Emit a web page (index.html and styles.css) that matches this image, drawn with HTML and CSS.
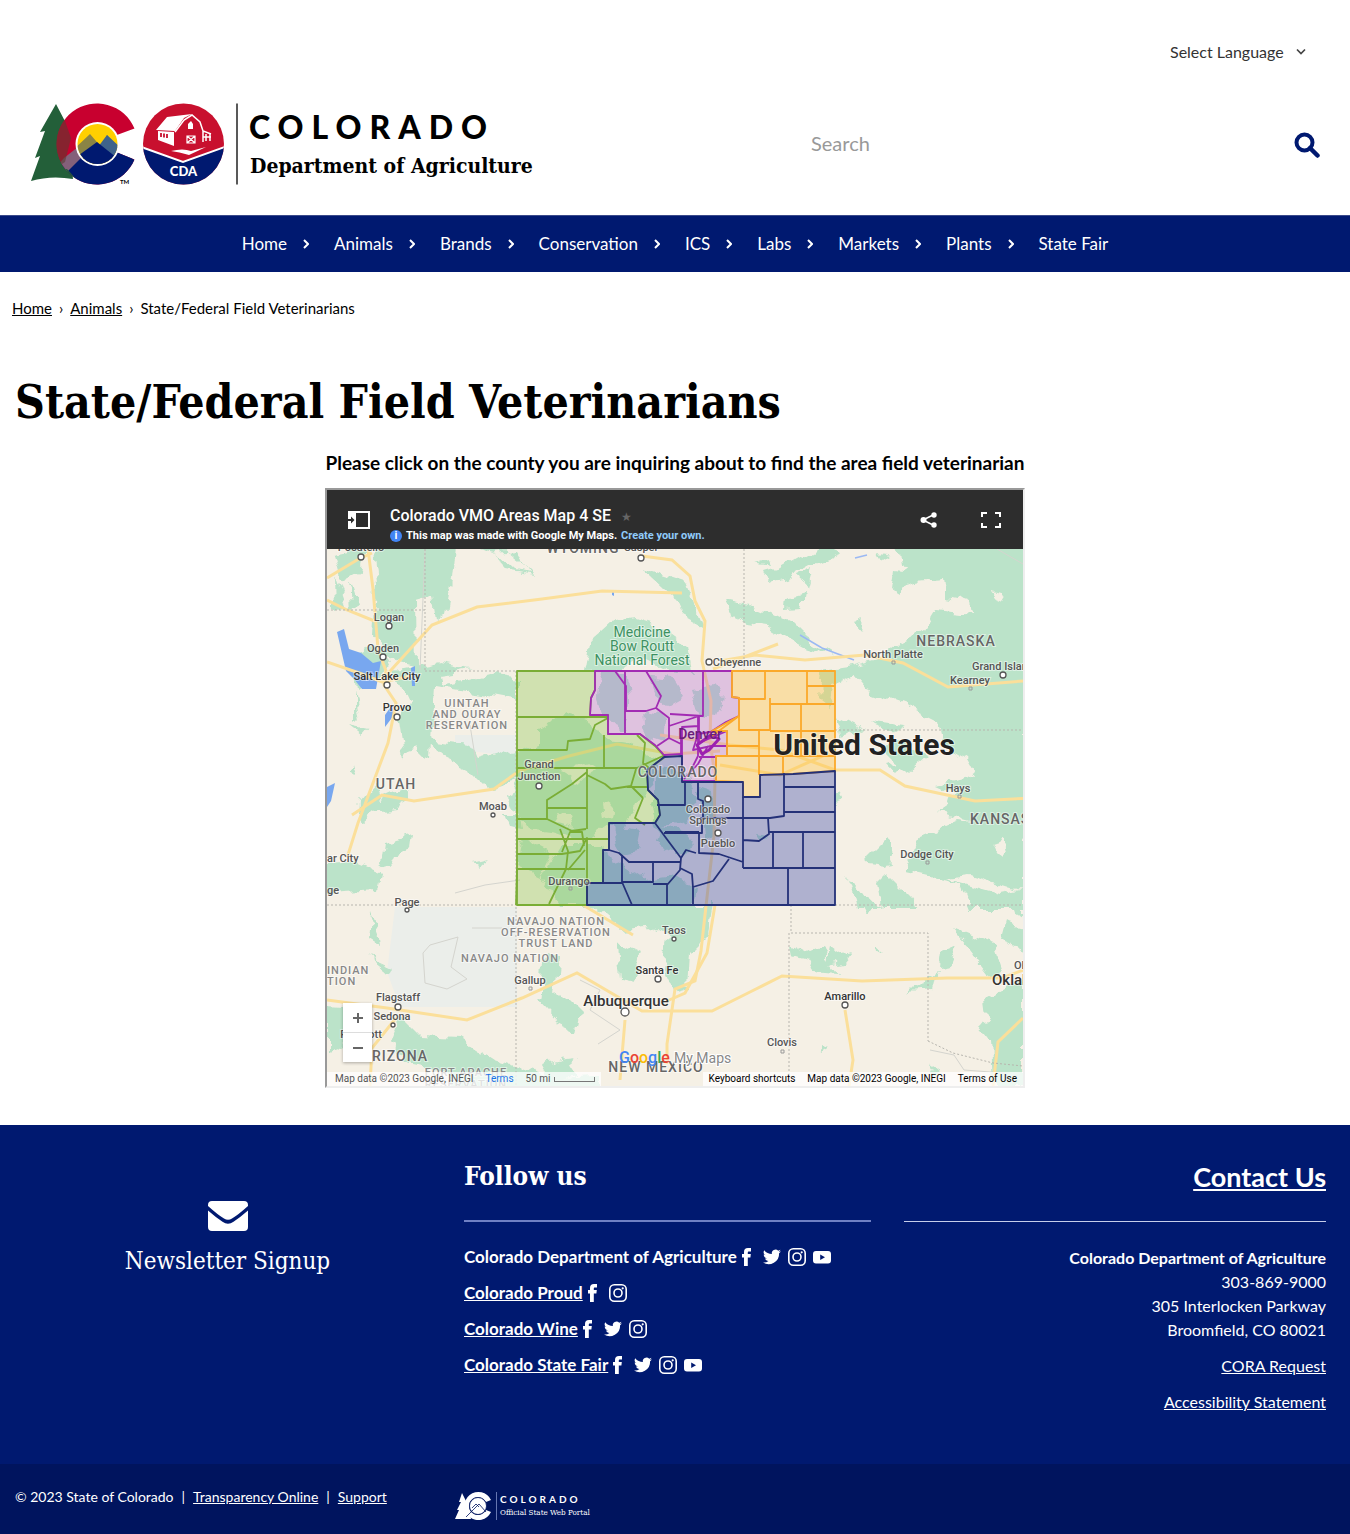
FILE: index.html
```html
<!DOCTYPE html>
<html lang="en">
<head>
<meta charset="utf-8">
<meta name="viewport" content="width=device-width, initial-scale=1">
<title>State/Federal Field Veterinarians | Department of Agriculture</title>
<link rel="stylesheet" href="styles.css">
</head>
<body>
<svg class="sprite" aria-hidden="true">
  <symbol id="i-chev" viewBox="0 0 6 10"><path d="M1 1l4 4-4 4" fill="none" stroke="currentColor" stroke-width="2"/></symbol>
  <symbol id="i-fb" viewBox="0 0 20 20"><path d="M7 19V10.500H5V7h2V5c0-2.700 1.300-4 4-4h3v3.500h-2c-1 0-1.200.4-1.200 1.200V7h3l-.4 3.500h-2.600V19z" fill="currentColor"/></symbol>
  <symbol id="i-tw" viewBox="0 0 20 20"><path d="M19 4.200c-.7.300-1.400.5-2.100.6.800-.5 1.300-1.200 1.600-2-.7.400-1.500.7-2.300.9a3.700 3.700 0 0 0-6.300 3.400A10.500 10.500 0 0 1 2.200 3.200a3.700 3.700 0 0 0 1.200 4.900c-.6 0-1.200-.2-1.700-.5 0 1.800 1.200 3.400 3 3.700-.6.200-1.100.2-1.700.1.500 1.500 1.800 2.500 3.500 2.600A7.400 7.400 0 0 1 1 15.500 10.500 10.500 0 0 0 17.100 6.200c.8-.5 1.400-1.200 1.900-2z" fill="currentColor"/></symbol>
  <symbol id="i-ig" viewBox="0 0 20 20"><g fill="none" stroke="currentColor" stroke-width="1.600"><rect x="1.800" y="1.800" width="16.400" height="16.400" rx="4.500"/><circle cx="10" cy="10" r="4"/></g><circle cx="14.700" cy="5.300" r="1.100" fill="currentColor"/></symbol>
  <symbol id="i-yt" viewBox="0 0 20 20"><path fill-rule="evenodd" d="M4 4h12q3 0 3 3v6.500q0 3-3 3H4q-3 0-3-3V7q0-3 3-3zm4.200 3.500v5.500l4.800-2.750z" fill="currentColor"/></symbol>
</svg>

<header class="site-header">
  <div class="language">
    <select class="language-select" aria-label="Select Language"><option>Select Language</option></select>
    <svg class="language-arrow" viewBox="0 0 10 8" aria-hidden="true"><path d="M1 1.500l4 4 4-4" fill="none" stroke="#444" stroke-width="1.700"/></svg>
  </div>
  <div class="masthead">
    <a class="logo" href="#" aria-label="Colorado Department of Agriculture">
      <svg class="logo-art" viewBox="30 102 510 86">
        <defs><clipPath id="seal"><circle cx="183.500" cy="144" r="40.500"/></clipPath><clipPath id="sun"><circle cx="97.500" cy="144" r="20"/></clipPath>
        <clipPath id="ring"><path d="M134.500 128.500A40.500 40.500 0 1 0 134.500 159.500L116 152A20 20 0 1 1 115.500 135.500z"/></clipPath></defs>
        <path d="M56 104l13 25-3-1 7 22-4-2 4 31q-22-4-42 2l9-25-5 2 10-27-5 1z" fill="#235f39"/>
        <g clip-path="url(#ring)"><rect x="50" y="100" width="90" height="90" fill="#c8002f"/><path d="M50 176l48-42 45 32v25H50z" fill="#001970"/><path d="M50 174l14-16 14-11 4 10-14 14-18 16z" fill="#84607a"/><path d="M56 104l8 14 7 20-6 24-12 8z" fill="#5a3a30" opacity=".6"/><path d="M52 172l15-3 9 10-20 5z" fill="#235f39"/></g>
        <circle cx="97.500" cy="144" r="22" fill="#fff"/>
        <g clip-path="url(#sun)"><rect x="75" y="120" width="45" height="45" fill="#ffcf00"/><path d="M72 151l18-17 12 14 5-13 16 18v15H72z" fill="#8a8445"/><path d="M98 147l9-12 14 13v18z" fill="#3e638b"/><path d="M75 158l22-16 24 19v10H75z" fill="#001970"/></g>
        <text x="120" y="184" class="logo-tm">TM</text>
        <g clip-path="url(#seal)"><rect x="140" y="100" width="90" height="90" fill="#c8102e"/><path d="M140 147l43 15 43-15v45h-86z" fill="#001970"/><path d="M140 146.500l43 15.500 43-15.500" fill="none" stroke="#fff" stroke-width="2"/></g>
        <path d="M156 130l11-13 25-3-8 4-9 13zM158 131l16 1v14l-16-6zM171 151q12-3 20 0l15-4-17 8q-10-3-18-4z" fill="#fff"/>
        <path d="M175 132l9-12 8-5 8 7 3 9 8 3M203 131v11M206 134v7M210 134v7M203 137h8" fill="none" stroke="#fff" stroke-width="1.500"/>
        <path d="M161 133v4M164 133.500v4M167 134v4" stroke="#c8102e" stroke-width="1.800"/>
        <path d="M188 129v-5l3-3 2 3v5z" fill="#fff"/>
        <path d="M187 136h8v7h-8zM187 136l8 7M195 136l-8 7" fill="none" stroke="#fff" stroke-width="1.200"/>
        <text x="183.500" y="176" text-anchor="middle" class="logo-cda">CDA</text>
        <path d="M237 103.500v81" stroke="#222" stroke-width="1.500"/>
        <text x="249" y="139" class="logo-state">COLORADO</text>
        <text x="250" y="173" class="logo-dept">Department of Agriculture</text>
      </svg>
    </a>
    <form class="search">
      <input class="search-box" type="search" placeholder="Search" aria-label="Search">
      <button class="search-button" type="button" aria-label="Search"><svg viewBox="0 0 26 26" width="26" height="26"><circle cx="10.500" cy="10.500" r="8" fill="none" stroke="#001970" stroke-width="4"/><path d="M16 16l7.500 7.500" stroke="#001970" stroke-width="4.500" stroke-linecap="round"/></svg></button>
    </form>
  </div>
</header>

<nav class="main-nav" aria-label="Main">
  <a href="#">Home <svg class="chev"><use href="#i-chev"/></svg></a>
  <a href="#">Animals <svg class="chev"><use href="#i-chev"/></svg></a>
  <a href="#">Brands <svg class="chev"><use href="#i-chev"/></svg></a>
  <a href="#">Conservation <svg class="chev"><use href="#i-chev"/></svg></a>
  <a href="#">ICS <svg class="chev"><use href="#i-chev"/></svg></a>
  <a href="#">Labs <svg class="chev"><use href="#i-chev"/></svg></a>
  <a href="#">Markets <svg class="chev"><use href="#i-chev"/></svg></a>
  <a href="#">Plants <svg class="chev"><use href="#i-chev"/></svg></a>
  <a href="#">State Fair</a>
</nav>

<main>
  <nav class="breadcrumb" aria-label="Breadcrumb"><a href="#">Home</a><span>›</span><a href="#">Animals</a><span>›</span>State/Federal Field Veterinarians</nav>
  <h1>State/Federal Field Veterinarians</h1>
  <p class="intro">Please click on the county you are inquiring about to find the area field veterinarian</p>

  <section class="map" aria-label="Colorado VMO Areas Map 4 SE">
    <div class="map-bar">
      <button class="map-icon" type="button" aria-label="Toggle legend"><svg viewBox="0 0 22 18" width="22" height="18"><rect x="1" y="1" width="20" height="16" fill="none" stroke="#fff" stroke-width="2"/><path d="M0 0h8v18H0z" fill="#fff"/><path d="M0 8h3V5.500L6.500 9 3 12.500V10H0z" fill="#2d2d2d"/></svg></button>
      <div class="map-heading">
        <div class="map-title">Colorado VMO Areas Map 4 SE <span class="star">★</span></div>
        <div class="map-sub"><span class="info">i</span>This map was made with Google My Maps. <a href="#">Create your own.</a></div>
      </div>
      <button class="map-icon" type="button" aria-label="Share"><svg viewBox="0 0 18 16" width="18" height="16" fill="#fff"><path d="M3 8l11-5.500M3 8l11 5.500" stroke="#fff" stroke-width="1.500"/><circle cx="3.500" cy="8" r="3"/><circle cx="14" cy="3" r="2.700"/><circle cx="14" cy="13" r="2.700"/></svg></button>
      <button class="map-icon" type="button" aria-label="Full screen"><svg viewBox="0 0 20 16" width="20" height="16" fill="none" stroke="#fff" stroke-width="2"><path d="M1 5V1h5M14 1h5v4M19 11v4h-5M6 15H1v-4"/></svg></button>
    </div>
    <div class="map-canvas">
      <svg class="map-art" viewBox="327 549 696 537">
        <defs><filter id="rough" x="-5%" y="-5%" width="110%" height="110%"><feTurbulence type="fractalNoise" baseFrequency=".055" numOctaves="3" seed="7"/><feDisplacementMap in="SourceGraphic" scale="16" xChannelSelector="R" yChannelSelector="G"/></filter></defs>
        <rect x="327" y="549" width="696" height="537" fill="#f5f0e5"/>
        <path d="M395 907h122v100H400l-13-35zM455 735h62v22l-62-8z" fill="#ebeeea"/>
        <g fill="#bbe3c9" filter="url(#rough)">
          <path d="M372 545h84l-3 35-6 32-10 8-4-25-18 5 1 70-20-5-23-30 3-50zM335 555l30-6-5 22-18 10zM335 575l10 30-9 5zM350 580l8 25-6 8zM478 548l18 4 9 20 30 5-18-18-15-12zM495 552l20-2 15 25-14-3zM640 566l45 15 18 45-22-12-8-18z"/>
          <path d="M763 571l27-8 28-16 20 8-25 10-25 14-20 4zM757 562l10-3 2 6zM800 575l14-6-6 22zM785 599l18-5-2 13-17 1zM726 598l24 5 20 9 20 10 18 18 25 15-30-9-35-20-20-3-18-8zM855 622l8-5-2 12zM878 555l12 2-8 5zM895 570l12 2 12-12 4 18-13 5-8 14-10-6zM945 590l14 4-4 8-10-2z"/>
          <path d="M892 545h136v290l-18 8-28 5 10-20-30-8-26-10 22-15-22-10 40-10-8-14-25-15-6-25-28-14-44-16-12-14-22 8-2 20-10-8 2-26 34-5 25-7 16-14 28-15 12-20 36 4-2-14-24-8-2-14-30 2-14-16-2-14z"/>
          <path d="M835 715l30 15-25 8zM870 720l35 5-15 8zM880 745l22-2 25 14-15 13-17-10zM835 790l8 10-8 3zM885 765l22-5-14 14zM868 855l18-18 8 22-8 10-17-2zM920 836l35-15 70 8v80h-55l-10-25-55-12 8-15zM846 873l18 25 20 10-4-24 8-8 20 20 8 12h-60z"/>
          <path d="M395 672l45-8 50 10 30 5v22l-38-7-48-8-4 75-15-15-10 15-6-40 10-18zM420 738l45 6 12 18 40-12v30l-28 8-18-18-26-12zM355 690l5 30-5 5zM380 800l28-12-10 22-25 3-15 14 2-26 15-17zM350 727l18 4-5 6zM352 762l4 15-8-5zM384 842l28-6-2 14-15 6-6 14-8-6zM327 865l30-3 24 10-4 17-50 3zM470 862l16-4-9 8zM358 690l-4-35 30-8 8 20-15 10zM503 815l18 0 2 15-15-2z"/>
          <path d="M600 672l28 0 2 30-6 26-20-8-6-20zM642 712l24 4-4 28-18-6zM648 676l24 2 12 20-14 8-14-12zM692 690l22-4 14 14-8 18-20-2zM590 640l20-18 26-4 24 8 28 20 4 26-24-2-20-10-30 10-34 2z"/>
          <path d="M540 730l26-16 24 8 14 16 24 4 30 16-6 30-14 14-14 30-18-4-20 14-28-10-30-4-20-30 10-20-8-24 30-10zM560 845l44 0 8 24-20 36h-34l-18-28zM520 840l30 15-10 20-25-12z"/>
          <path d="M656 768l30 4 12 26-12 24-28 6-8-20 6-14zM612 826l30 4-4 20-18 4zM590 872l30-10 26 18 30-4 20 12-4 17h-100zM660 826l24 6 12 16-14 8-26-14zM700 790l12 4 4 40-12 6zM755 834l14 2-8 8z"/>
          <path d="M593 905h120l-5 30-18 18-2 35-15 4-10-22 5-34-20-10-28 2zM616 940l24 12-6 28-14-3zM545 950l14 5-4 40-14 10zM535 998l25-5 20 20-4 18-18-8zM370 915l8 22 1 10-11-7zM367 957l26 12-4 5zM327 1008l28 2 5 30-33 12zM400 1015l20 20 40 2 34 22 55 18 50-2v15H455l-10-20-40-8-15-20zM540 1065l28-6 10 15-30 5zM562 1058l18-2-12 10z"/>
          <path d="M792 944l18 10 10-4 8 12 8 12-20-2-8-12-14-4zM828 948l8 6 16-4-10 12-16 3zM877 945l9 8-8-3zM905 993l32-20-4 18zM940 955l18-8-8 20-12 2zM950 928l45 18 8 25-15 3-20-26zM1000 940l24 10v-20l-20-5zM985 1000l38-20v106h-30l-2-45-12-15 8-10zM860 905l14 0-8 12zM820 1048l10 2-8 5zM925 1060l12 10-2 5zM945 1010l12 15zM1000 905h23v15z"/>
        </g>
        <g fill="#f5f0e5" filter="url(#rough)"><path d="M988 592l12 2 3 8-10-4zM440 675l32-5 25 2-30 8-25 6zM990 845l12-4 3 12-10 3zM945 878l25-3 50 15-20 4zM560 770l24-6 12 8-18 10zM600 800l12 4-2 14-8 2zM556 812l14 2 4 12-14-4z"/></g>
        <g fill="#78a7ef"><path d="M337 632l7-3 5 20 12 4 12 10 8-2-5 28-14 0-8-10-8-8zM385 715l7-10 2 10-9 12zM327 787l8-4-4 18-4 6zM411 668l4-2v20h-3zM612 591h2v5l-2-1z"/><path d="M855 558l12-3M800 635l22 13 32 12" fill="none" stroke="#9bb9f3" stroke-width="1.500"/></g>
        <path d="M470 725l8 50M425 550l-5 120M472 928h30M430 945l28-8-7 30 16 12-20 10-22-6-2-30zM580 980l20 10-10 20 30 20-22 14M997 549l26 15M930 1050l24 5 10 15 40 3M455 893l30-8 35-5" fill="none" stroke="#d4d4ce" stroke-width="1"/>
        <g fill="none" stroke="#fbdf9a" stroke-width="3">
          <path d="M327 578l30-18 15-7M368 549l5 40 5 60 8 22-2 14 12 18-8 40-30 80-11 35M327 662l35 12 20 8 30-6M327 600l20 10 30 12M382 680l50-55 45-18 65-8 60-8 80 2"/><path d="M352 815l30-20 32 6 80-12 25-18 50-15 48-12 55 10 48-3M660 735l70 10 50 5 55 20 45 0 25 16 70 15 75-4"/><path d="M642 556l30 4 18 16 5 25 10 20-3 40 9 40-1 40 5 35-1 60-8 70-5 45-6 30-20 8-8 55 0 20M720 661l35-6 50 5 60-5 38 8 45 24 75-6M713 669l65-25M583 905l50 30"/><path d="M327 1000l60 8 80 12 55-22 55-25 65 38 70 0 40-20 30-15 80 5 85-3 55 0 40-15 60-5M625 1020l-5 60M715 905l-8 48-22 40-18 8M396 1018l-24 30-2 38M845 1010l8 50-4 26M1023 1018l-25 24-5 44M720 765l60 10 45-20"/>
        </g>
        <g fill="none" stroke="#b7b5ae" stroke-width="1" stroke-dasharray="2 2"><path d="M327 610h98v61M425 549v61M425 671h410M744 549v122M835 730h188M327 905h696M516 671v415M791 905v28h137v108M789 933v153M928 1041l25 12 40 10 30 3"/></g>
        <g fill="none" stroke-width="1.800" stroke-linejoin="round">
          <path d="M517 671h78v19l-4 8-1 17h18v19h32l15 12 10 11-18 13 1 20 10 10 2 15-5 8h-46v27h-6v33h-16v22h-70z" fill="#8bc34a" fill-opacity=".34" stroke="#7aad35"/>
          <path d="M517 717h91M517 750h50l1-9 22-2 5-14 13-7M517 768h120l28-13M604 735v33M637 735l8 8-2 20 6 5M587 768v61M547 820v-20l25-16 15-12M547 808h40M517 819h30l25 12 14-2M517 839h91M517 854h45l18-3 7-13v67M517 869h68M517 869l-1 36M560 829l8 22-2 18-17 35M587 775l18 9 6 5 20-3 12 12M631 786l5-17M643 798l-8 20 10 7M585 850l-17 20M562 852l8-20 12 0 2 14M627 787h20" stroke="#7aad35"/>
          <path d="M732 671v26l7 1v18l-13 6-14 9h15v25h-11v25h-34v-27l-18 1-9-10-15-11h-32v-19h-18l1-17 4-8v-19z" fill="#a64bd0" fill-opacity=".28" stroke="#a22bb3"/>
          <path d="M625 671v63M615 671l11 15v25l20 0 10-3 5-12-15-25M656 708l13 10v20l-12 8M703 671v45l-33-2M669 726l30-10 0 27 28-12M682 755v-28l17-1M669 738l12 6M698 716v40l-10 20M699 757h17M681 728v28M726 746h-15l-18 4 5-16 18-3M708 746l-10 18-14 15" stroke="#a22bb3"/>
          <path d="M697 745l14-10 8 4-10 11-7 4z" stroke="#9c1fb0" stroke-width="3"/>
          <path d="M732 671h103v100l-42 3-33 1v22h-17v-15l-27-1v-25h11v-25h-15l27-15v-18l-7-1z" fill="#ffbf3f" fill-opacity=".38" stroke="#fba92a"/>
          <path d="M765 671v28l-26 0M807 671v33h-37v26h-31v-14M770 698v6M807 686h28M807 704h28M801 704v52M759 731v44M727 746h32M727 756h108M783 756v18M770 731l65 0M739 716l-27 20" stroke="#fba92a"/>
          <path d="M835 771l-42 3-33 1v22h-17v-15h-61v-26l-18 1-17 13 1 20 10 10 2 15-5 8h-46v27h-6v33h-16v22h248z" fill="#3542a8" fill-opacity=".36" stroke="#243178"/>
          <path d="M784 773v43l-14 2h-70M784 787h51M784 812h51M743 797v71M702 818v15h-38M743 840l16 1 10-7-1-16M768 832h67M773 832v36M803 832v36M743 868h92M788 868v37M699 833v20l20 1 24 8M609 850l10 3 10 9h52M622 855v28h-19M622 882h31v-20M653 884h14v21M622 882l10 23M685 783v22h-28M693 905v-18l20-6 16-22M698 782v17l5 2v17M655 823l11 15 15 20-1 12-13 15M681 858l5-8 10 3M665 832h34M680 868l12 6 1 14" stroke="#243178"/>
        </g>
        <g class="map-labels">
          <text x="361" y="551">Pocatello</text><text x="641" y="551">Casper</text><text x="583" y="553" class="state">WYOMING</text>
          <text x="389" y="621">Logan</text><text x="383" y="652">Ogden</text><text x="387" y="680" class="mid">Salt Lake City</text><text x="397" y="711" class="mid">Provo</text>
          <text x="737" y="666">Cheyenne</text><text x="893" y="658">North Platte</text><text x="970" y="684">Kearney</text><text x="972" y="670" class="start">Grand Island</text>
          <g class="forest"><text x="642" y="637">Medicine</text><text x="642" y="651">Bow Routt</text><text x="642" y="665">National Forest</text></g>
          <text x="956" y="646" class="state">NEBRASKA</text><text x="396" y="789" class="state">UTAH</text><text x="678" y="777" class="state">COLORADO</text><text x="970" y="824" class="state start">KANSAS</text>
          <g class="reserve"><text x="467" y="707">UINTAH</text><text x="467" y="718">AND OURAY</text><text x="467" y="729">RESERVATION</text><text x="556" y="925">NAVAJO NATION</text><text x="556" y="936">OFF-RESERVATION</text><text x="556" y="947">TRUST LAND</text><text x="510" y="962">NAVAJO NATION</text><text x="327" y="974" class="start">INDIAN</text><text x="327" y="985" class="start">TION</text><text x="466" y="1076">FORT APACHE</text><text x="466" y="1088">RESERVATION</text></g>
          <text x="539" y="768">Grand</text><text x="539" y="780">Junction</text><text x="493" y="810">Moab</text><text x="700" y="739" class="denver">Denver</text>
          <text x="864" y="755" class="country">United States</text>
          <text x="708" y="813">Colorado</text><text x="708" y="824">Springs</text><text x="718" y="847">Pueblo</text><text x="569" y="885">Durango</text>
          <text x="958" y="792">Hays</text><text x="927" y="858">Dodge City</text><text x="327" y="862" class="start">ar City</text><text x="327" y="894" class="start">ge</text><text x="407" y="906">Page</text>
          <text x="674" y="934">Taos</text><text x="657" y="974" class="mid">Santa Fe</text><text x="530" y="984">Gallup</text><text x="626" y="1006" class="city">Albuquerque</text><text x="398" y="1001">Flagstaff</text><text x="392" y="1020">Sedona</text><text x="361" y="1038">Prescott</text>
          <text x="372" y="1061" class="state start">RIZONA</text><text x="845" y="1000" class="mid">Amarillo</text><text x="782" y="1046">Clovis</text><text x="992" y="985" class="city start">Oklahoma</text><text x="1014" y="969" class="start">OK</text><text x="656" y="1072" class="state">NEW MEXICO</text>
        </g>
        <g fill="#fff" stroke="#555" stroke-width="1.300"><circle cx="361" cy="557" r="3"/><circle cx="641" cy="558" r="3"/><circle cx="389" cy="626" r="3"/><circle cx="383" cy="657" r="3"/><circle cx="387" cy="685" r="3"/><circle cx="397" cy="717" r="3"/><circle cx="709" cy="662" r="3"/><circle cx="1003" cy="675" r="3"/><circle cx="539" cy="786" r="3"/><circle cx="493" cy="815" r="2"/><circle cx="708" cy="799" r="3"/><circle cx="718" cy="833" r="3"/><circle cx="407" cy="910" r="2"/><circle cx="674" cy="939" r="2"/><circle cx="658" cy="979" r="3"/><circle cx="625" cy="1012" r="4"/><circle cx="398" cy="1007" r="3"/><circle cx="393" cy="1025" r="2"/><circle cx="845" cy="1005" r="3"/></g>
        <g fill="none" stroke="#999"><path d="M569 887h3v3h-3zM529 987h3v3h-3zM781 1050h3v3h-3zM958 795h3v3h-3zM926 861h3v3h-3zM892 661h3v3h-3zM969 687h3v3h-3z"/></g>
        <text x="619" y="1063" class="google"><tspan fill="#4285f4">G</tspan><tspan fill="#ea4335">o</tspan><tspan fill="#fbbc05">o</tspan><tspan fill="#4285f4">g</tspan><tspan fill="#34a853">l</tspan><tspan fill="#ea4335">e</tspan></text>
        <text x="674" y="1063" class="mymaps">My Maps</text>
      </svg>
      <div class="zoom"><button type="button" aria-label="Zoom in"><svg viewBox="0 0 12 12" width="12" height="12"><path d="M6 1v10M1 6h10" stroke="#666" stroke-width="2"/></svg></button><button type="button" aria-label="Zoom out"><svg viewBox="0 0 12 12" width="12" height="12"><path d="M1 6h10" stroke="#666" stroke-width="2"/></svg></button></div>
      <div class="credit credit-left"><span>Map data ©2023 Google, INEGI</span><a href="#">Terms</a><span>50 mi<i class="scale"></i></span></div>
      <div class="credit credit-right"><span>Keyboard shortcuts</span><span>Map data ©2023 Google, INEGI</span><a href="#">Terms of Use</a></div>
    </div>
  </section>
</main>

<footer>
  <div class="footer-main">
    <div class="newsletter">
      <svg viewBox="0 0 40 30" width="40" height="30" aria-hidden="true"><path d="M0 4q0-4 4-4h32q4 0 4 4v1Q30 14 24 17.500q-4 2.500-8 0Q10 14 0 5zM0 9.500q8 7 14.500 11.300 5.500 3.700 11 0Q32 16.500 40 9.500V26q0 4-4 4H4q-4 0-4-4z" fill="#fff"/></svg>
      <a href="#">Newsletter Signup</a>
    </div>
    <div class="follow">
      <h2>Follow us</h2>
      <ul>
        <li><span>Colorado Department of Agriculture</span><a href="#" aria-label="Facebook"><svg><use href="#i-fb"/></svg></a><a href="#" aria-label="Twitter"><svg><use href="#i-tw"/></svg></a><a href="#" aria-label="Instagram"><svg><use href="#i-ig"/></svg></a><a href="#" aria-label="YouTube"><svg><use href="#i-yt"/></svg></a></li>
        <li><a class="name" href="#">Colorado Proud</a><a href="#" aria-label="Facebook"><svg><use href="#i-fb"/></svg></a><a href="#" aria-label="Instagram"><svg><use href="#i-ig"/></svg></a></li>
        <li><a class="name" href="#">Colorado Wine</a><a href="#" aria-label="Facebook"><svg><use href="#i-fb"/></svg></a><a href="#" aria-label="Twitter"><svg><use href="#i-tw"/></svg></a><a href="#" aria-label="Instagram"><svg><use href="#i-ig"/></svg></a></li>
        <li><a class="name" href="#">Colorado State Fair</a><a href="#" aria-label="Facebook"><svg><use href="#i-fb"/></svg></a><a href="#" aria-label="Twitter"><svg><use href="#i-tw"/></svg></a><a href="#" aria-label="Instagram"><svg><use href="#i-ig"/></svg></a><a href="#" aria-label="YouTube"><svg><use href="#i-yt"/></svg></a></li>
      </ul>
    </div>
    <div class="contact">
      <h2><a href="#">Contact Us</a></h2>
      <address><strong>Colorado Department of Agriculture</strong><br>303-869-9000<br>305 Interlocken Parkway<br>Broomfield, CO 80021</address>
      <p><a href="#">CORA Request</a></p>
      <p><a href="#">Accessibility Statement</a></p>
    </div>
  </div>
  <div class="footer-base">
    <div class="legal">© 2023 State of Colorado<span>|</span><a href="#">Transparency Online</a><span>|</span><a href="#">Support</a></div>
    <a class="portal" href="#" aria-label="Colorado Official State Web Portal">
      <svg viewBox="0 0 140 30" width="140" height="30"><path d="M7 2l6 12 3 14H0l4-9H2l4-8H4z" fill="#fff"/><path d="M36 9A14 14 0 1 0 36 21L31 19A9 9 0 1 1 31 11z" fill="#fff"/><circle cx="23" cy="15" r="8.500" fill="#fff" stroke="#00145e" stroke-width=".8"/><path d="M11 26l13-13 7 8M17 17l4-4 3 3" fill="none" stroke="#00145e" stroke-width=".8"/><path d="M41.500 1v28" stroke="#7f8fc8" stroke-width=".8"/><text x="45" y="12" class="portal-state">COLORADO</text><text x="45" y="24" class="portal-sub">Official State Web Portal</text></svg>
    </a>
  </div>
</footer>
</body>
</html>
```
FILE: styles.css
```css
* { box-sizing: border-box; }
body { margin: 0; background: #fff; color: #000; font: 16px/24px Lato, "Open Sans", sans-serif; }
button { border: 0; padding: 0; background: none; cursor: pointer; }
.sprite { position: absolute; width: 0; height: 0; }
a { color: inherit; }

.site-header { padding: 36px 30px 27px; }
.language { display: grid; width: 144px; margin-left: auto; margin-right: 6px; align-items: center; }
.language-select { grid-area: 1 / 1; appearance: none; border: 0; padding: 0 26px 0 0; background: none; color: #333; font: 16px/32px Lato, sans-serif; }
.language-arrow { grid-area: 1 / 1; justify-self: end; width: 10px; height: 8px; margin-right: 4px; pointer-events: none; }
.language-arrow { margin-right: 8px; }
.masthead { display: flex; justify-content: space-between; align-items: center; margin-top: 34px; }
.logo { flex: 0 1 510px; }
.logo-art { display: block; width: 100%; }
.logo-tm { font: bold 6px Lato, sans-serif; }
.logo-cda { font: 900 13px Lato, sans-serif; fill: #fff; }
.logo-state { font: 900 32px Lato, sans-serif; letter-spacing: 8px; }
.logo-dept { font: bold 21px "DejaVu Serif Condensed", "DejaVu Serif", serif; }
.search { display: flex; align-items: center; flex: 0 1 509px; }
.search-box { flex: 1; min-width: 0; border: 0; padding: 0 0 4px; background: none; font: 20px/28px Lato, sans-serif; }
.search-box::placeholder { color: #999; opacity: 1; }
.search-button svg { display: block; }

.main-nav { display: flex; flex-wrap: wrap; justify-content: center; align-items: center; gap: 0 25px; min-height: 57px; border-top: 1px solid #3a4a8a; background: #001970; color: #fff; }
.main-nav a { display: flex; align-items: center; gap: 16px; color: #fff; font-size: 17px; text-decoration: none; }
.chev { width: 6px; height: 10px; }

.breadcrumb { padding: 24px 12px 0; font-size: 15px; }
.breadcrumb span { margin: 0 7px; }
h1 { margin: 52px 15px 19px; font: bold 46px/60px "DejaVu Serif Condensed", "DejaVu Serif", serif; }
.intro { margin: 0 16px 13px; text-align: center; font-size: 19px; font-weight: bold; }

.map { width: 700px; max-width: 100%; margin: 0 auto 37px; border: 2px solid #eee; border-top-color: #999; border-left-color: #999; font-family: Roboto, sans-serif; }
.map-bar { display: flex; align-items: center; min-height: 59px; padding: 0 22px 0 21px; background: #2d2d2d; color: #fff; }
.map-icon { display: flex; margin-left: 43px; }
.map-icon:first-child { margin-left: 0; }
.map-heading { flex: 1; padding: 11px 0 0 20px; }
.map-title { font-size: 16px; font-weight: 500; line-height: 20px; }
.star { margin-left: 6px; color: #666; font-size: 12px; }
.map-sub { display: flex; align-items: center; gap: 4px; font-size: 11px; font-weight: 700; line-height: 18px; }
.map-sub a { color: #90caf9; text-decoration: none; }
.info { width: 12px; height: 12px; border-radius: 6px; background: #4285f4; line-height: 12px; text-align: center; }
.map-canvas { position: relative; overflow: hidden; }
.map-art { display: block; width: 100%; }
.map-labels { font-size: 11px; font-weight: 500; fill: #555; text-anchor: middle; paint-order: stroke; stroke: #fff; stroke-opacity: .5; stroke-width: 2px; }
.map-labels .start { text-anchor: start; }
.map-labels .state { font-size: 14px; letter-spacing: 1px; fill: #666; }
.map-labels .mid { fill: #333; }
.map-labels .forest { font-size: 14px; font-weight: 400; fill: #3d9162; }
.map-labels .reserve { font-size: 11px; letter-spacing: 1px; fill: #888; }
.map-labels .denver { font-size: 14px; fill: #6b1d7a; stroke: none; }
.map-labels .city { font-size: 15px; fill: #333; }
.map-labels .country { font-size: 30px; font-weight: 700; fill: #222; }
.google { font: 500 16px Roboto, sans-serif; }
.mymaps { font: 14px Roboto, sans-serif; fill: #888; paint-order: stroke; stroke: #fff; stroke-width: 2px; }
.zoom { position: absolute; left: 16px; bottom: 24px; width: 29px; background: #fff; box-shadow: 0 1px 3px rgba(0, 0, 0, .3); }
.zoom button { display: flex; align-items: center; justify-content: center; width: 29px; height: 29px; }
.zoom button + button { height: 30px; border-top: 1px solid #ddd; }
.credit { position: absolute; bottom: 0; display: flex; gap: 12px; background: rgba(255, 255, 255, .75); font-size: 10px; line-height: 14px; white-space: nowrap; }
.credit a { text-decoration: none; }
.credit-left { left: 0; padding: 0 6px 0 8px; color: #555; }
.credit-left a { color: #1a73e8; }
.credit-right { right: 0; padding: 0 6px; }
.scale { display: inline-block; width: 41px; height: 5px; margin-left: 4px; border: 1px solid #777; border-top: 0; }

footer { color: #fff; }
.footer-main { display: grid; grid-template-columns: 455fr 433fr 462fr; min-height: 339px; padding-top: 33px; background: #001970; }
.newsletter { display: flex; flex-direction: column; align-items: center; gap: 14px; padding-top: 43px; }
.newsletter a { color: #fff; font: 24px/32px "DejaVu Serif Condensed", "DejaVu Serif", serif; text-decoration: none; }
.follow { padding: 0 17px 0 9px; }
.contact { padding: 0 24px 0 16px; text-align: right; }
h2 { margin: 0 0 24px; padding-bottom: 26px; border-bottom: 1px solid #c5cdea; font: bold 26px/37px "DejaVu Serif Condensed", "DejaVu Serif", serif; }
.follow h2 { padding-bottom: 25px; border-bottom: 2px solid #6f80c4; margin-bottom: 23px; }
.contact h2 { font: bold 27px/37px Lato, sans-serif; }
.follow ul { margin: 0; padding: 0; list-style: none; font-size: 17px; font-weight: bold; }
.follow li { display: flex; align-items: center; gap: 5px; margin-bottom: 12px; }
.follow li svg { display: block; width: 20px; height: 20px; }
.follow li span, .follow .name { margin-right: -5px; }
address { font-style: normal; }
.contact p { margin: 12px 0 0; }
.footer-base { display: grid; grid-template-columns: 455fr 895fr; align-items: center; min-height: 70px; padding-top: 14px; background: #00145e; }
.legal { padding: 0 0 18px 15px; font-size: 14px; }
.legal span { margin: 0 8px; }
.portal svg { display: block; }
.portal-state { font: bold 10px Lato, sans-serif; letter-spacing: 3px; fill: #fff; }
.portal-sub { font: 8px "DejaVu Serif Condensed", "DejaVu Serif", serif; fill: #fff; }
```
